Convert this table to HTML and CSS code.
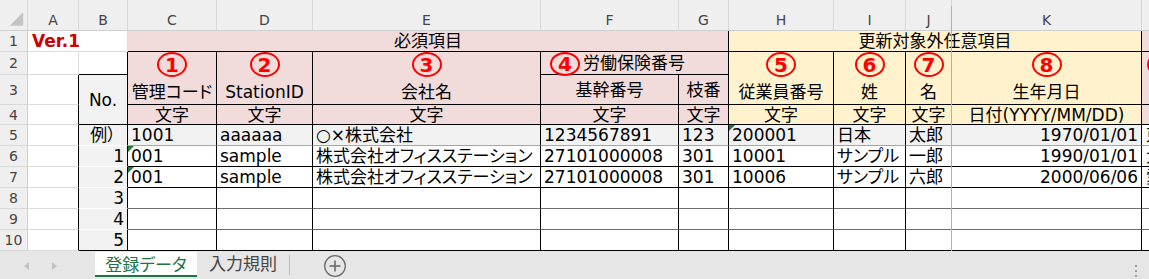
FILE: index.html
```html
<!DOCTYPE html>
<html lang="ja">
<head>
<meta charset="utf-8">
<title>登録データ</title>
<link rel="stylesheet" href="styles.css">
</head>
<body>
<div class="sheet">
  <div class="hd corner"><svg width="28" height="31" viewBox="0 0 28 31"><polygon points="24,12 24,26 10,26" fill="#c4c4c4"/></svg></div>
  <div class="hd">A</div><div class="hd">B</div><div class="hd">C</div><div class="hd">D</div>
  <div class="hd">E</div><div class="hd">F</div><div class="hd">G</div><div class="hd">H</div>
  <div class="hd">I</div><div class="hd">J</div><div class="hd">K</div><div class="hd">L</div>

  <div class="rh">1</div>
  <div class="c s2 ver">Ver.1</div>
  <div class="c s5 pk kr kb ctr">必須項目</div>
  <div class="c s4 yl kr kb ctr">更新対象外任意項目</div>
  <div class="c pk kb"></div>

  <div class="rh">2</div>
  <div class="c"></div>
  <div class="c kr kb"></div>
  <div class="c r2 pk kr kb hd2"><span class="num">1</span><span class="lbl">管理コード</span></div>
  <div class="c r2 pk kr kb hd2"><span class="num">2</span><span class="lbl">StationID</span></div>
  <div class="c r2 pk kr kb hd2"><span class="num">3</span><span class="lbl">会社名</span></div>
  <div class="c s2 pk kr kb rosai"><span class="num">4</span><span class="lbl">労働保険番号</span></div>
  <div class="c r2 yl kr kb hd2"><span class="num">5</span><span class="lbl">従業員番号</span></div>
  <div class="c r2 yl kr kb hd2"><span class="num">6</span><span class="lbl">姓</span></div>
  <div class="c r2 yl gr kb hd2"><span class="num">7</span><span class="lbl">名</span></div>
  <div class="c r2 yl kr kb hd2"><span class="num">8</span><span class="lbl">生年月日</span></div>
  <div class="c r2 pk kb hd2 lcol"><span class="num">9</span><span class="lbl">&nbsp;</span></div>

  <div class="rh">3</div>
  <div class="c kr"></div>
  <div class="c r2 gy kr kb ctr">No.</div>
  <div class="c pk kr kb ctr">基幹番号</div>
  <div class="c pk kr kb ctr">枝番</div>

  <div class="rh">4</div>
  <div class="c kr"></div>
  <div class="c pk kr kb ctr">文字</div>
  <div class="c pk kr kb ctr">文字</div>
  <div class="c pk kr kb ctr">文字</div>
  <div class="c pk kr kb ctr">文字</div>
  <div class="c pk kr kb ctr">文字</div>
  <div class="c yl kr kb ctr">文字</div>
  <div class="c yl kr kb ctr">文字</div>
  <div class="c yl gr kb ctr">文字</div>
  <div class="c yl kr kb ctr">日付(YYYY/MM/DD)</div>
  <div class="c pk kb"></div>

  <div class="rh">5</div>
  <div class="c kr"></div>
  <div class="c gy kr wb ctr">例）</div>
  <div class="c gy kr mb">1001</div>
  <div class="c gy kr mb">aaaaaa</div>
  <div class="c gy kr mb">○×株式会社</div>
  <div class="c gy kr mb">1234567891</div>
  <div class="c gy kr mb">123</div>
  <div class="c gy kr mb tri">200001</div>
  <div class="c gy kr mb">日本</div>
  <div class="c gy gr mb">太郎</div>
  <div class="c gy kr mb rt">1970/01/01</div>
  <div class="c mb lpad">東京都</div>

  <div class="rh">6</div>
  <div class="c kr"></div>
  <div class="c gy kr wb rt">1</div>
  <div class="c kr kb tri">001</div>
  <div class="c kr kb">sample</div>
  <div class="c kr kb">株式会社オフィスステーション</div>
  <div class="c kr kb">27101000008</div>
  <div class="c kr kb">301</div>
  <div class="c kr kb">10001</div>
  <div class="c kr kb">サンプル</div>
  <div class="c gr kb">一郎</div>
  <div class="c kr kb rt">1990/01/01</div>
  <div class="c kb lpad">大阪府</div>

  <div class="rh">7</div>
  <div class="c kr"></div>
  <div class="c gy kr wb rt">2</div>
  <div class="c kr kb tri">001</div>
  <div class="c kr kb">sample</div>
  <div class="c kr kb">株式会社オフィスステーション</div>
  <div class="c kr kb">27101000008</div>
  <div class="c kr kb">301</div>
  <div class="c kr kb">10006</div>
  <div class="c kr kb">サンプル</div>
  <div class="c gr kb">六郎</div>
  <div class="c kr kb rt">2000/06/06</div>
  <div class="c kb lpad">愛知県</div>

  <div class="rh">8</div>
  <div class="c kr"></div>
  <div class="c gy kr wb rt">3</div>
  <div class="c kr db"></div><div class="c kr db"></div><div class="c kr db"></div>
  <div class="c kr db"></div><div class="c kr db"></div><div class="c kr db"></div>
  <div class="c kr db"></div><div class="c gr db"></div><div class="c kr db"></div>
  <div class="c db"></div>

  <div class="rh">9</div>
  <div class="c kr"></div>
  <div class="c gy kr wb rt">4</div>
  <div class="c kr db"></div><div class="c kr db"></div><div class="c kr db"></div>
  <div class="c kr db"></div><div class="c kr db"></div><div class="c kr db"></div>
  <div class="c kr db"></div><div class="c gr db"></div><div class="c kr db"></div>
  <div class="c db"></div>

  <div class="rh">10</div>
  <div class="c kr"></div>
  <div class="c gy kr kb rt">5</div>
  <div class="c kr kb"></div><div class="c kr kb"></div><div class="c kr kb"></div>
  <div class="c kr kb"></div><div class="c kr kb"></div><div class="c kr kb"></div>
  <div class="c kr kb"></div><div class="c gr kb"></div><div class="c kr kb"></div>
  <div class="c kb"></div>

  <div class="freeze"></div>
</div>

<div class="tabs">
  <div class="nav">
    <svg width="95" height="28" viewBox="0 0 95 28">
      <polygon points="29,11 24,15 29,19" fill="#c2c2c2"/>
      <polygon points="52,11 57,15 52,19" fill="#c2c2c2"/>
    </svg>
  </div>
  <div class="tab active">登録データ</div>
  <div class="tab">入力規則</div>
  <div class="sep"></div>
  <div class="add">
    <svg width="24" height="24" viewBox="0 0 24 24">
      <circle cx="12" cy="12" r="10.3" fill="none" stroke="#6b6b6b" stroke-width="1.3"/>
      <line x1="12" y1="6.5" x2="12" y2="17.5" stroke="#6b6b6b" stroke-width="1.6"/>
      <line x1="6.5" y1="12" x2="17.5" y2="12" stroke="#6b6b6b" stroke-width="1.6"/>
    </svg>
  </div>
  <div class="dots">
    <svg width="4" height="16" viewBox="0 0 4 16">
      <rect x="1" y="1" width="2" height="2" fill="#9a9a9a"/>
      <rect x="1" y="6" width="2" height="2" fill="#9a9a9a"/>
      <rect x="1" y="11" width="2" height="2" fill="#9a9a9a"/>
    </svg>
  </div>
</div>
</body>
</html>
```

FILE: styles.css
```css
* { box-sizing: border-box; }

html, body {
  margin: 0;
  padding: 0;
  background: #ffffff;
  overflow: hidden;
}

body {
  width: 1149px;
  height: 279px;
  font-family: "DejaVu Sans", "Noto Sans CJK JP", sans-serif;
  font-size: 17px;
  color: #000;
  font-feature-settings: "palt";
}

.sheet {
  display: grid;
  grid-template-columns: 28px 51px 49px 89px 96px 228px 138px 50px 105px 72px 46px 190px 120px;
  grid-template-rows: 31px 21px 23px 30px 20px repeat(6, 21px);
  width: 1262px;
  position: relative;
}

/* column headers */
.hd {
  background: #efefef;
  border-right: 1px solid #d6d6d6;
  border-bottom: 1px solid #cfcfcf;
  color: #444;
  font-size: 14px;
  display: flex;
  align-items: center;
  justify-content: center;
  padding-top: 10px;
}
.corner { padding: 0; }

/* row headers */
.rh {
  background: #efefef;
  border-right: 1px solid #cfcfcf;
  border-bottom: 1px solid #d9d9d9;
  color: #444;
  font-size: 14px;
  display: flex;
  align-items: center;
  justify-content: center;
}

/* cells */
.c {
  border-right: 1px solid #dcdcdc;
  border-bottom: 1px solid #dcdcdc;
  display: flex;
  align-items: center;
  padding: 0 3px;
  white-space: nowrap;
  overflow: hidden;
  line-height: 20px;
}

.s2 { grid-column: span 2; }
.s4 { grid-column: span 4; }
.s5 { grid-column: span 5; }
.r2 { grid-row: span 2; }

.pk { background: #f2dcdb; }
.yl { background: #fff2cc; }
.gy { background: #f2f2f2; }

.kr { border-right-color: #000; }
.gr { border-right-color: #a8a8a8; }
.kb { border-bottom-color: #000; }
.mb { border-bottom-color: #a6a6a6; }
.db { border-bottom-color: #6e6e6e; }
.wb { border-bottom-color: #ffffff; }

.ctr { justify-content: center; }
.rt { justify-content: flex-end; padding-right: 3px; }
.lpad { padding-left: 4px; }

.ver {
  color: #cc0000;
  font-weight: bold;
  padding-left: 4px;
}

/* merged header cells with circled numbers */
.hd2 {
  flex-direction: column;
  justify-content: space-between;
  align-items: center;
  padding: 0 0 1px;
}
.hd2 .lbl { line-height: 22px; }

.num {
  display: inline-flex;
  align-items: center;
  justify-content: center;
  flex: none;
  width: 30px;
  height: 25px;
  border: 2px solid #ff0000;
  border-radius: 50%;
  color: #ff0000;
  font-family: "DejaVu Sans", sans-serif;
  font-weight: bold;
  font-size: 20px;
  line-height: 1;
}

.rosai {
  align-items: flex-start;
  padding-left: 9px;
  overflow: visible;
  position: relative;
  z-index: 1;
}
.rosai .num { height: 24px; }
.rosai .lbl { line-height: 22px; margin-left: 3px; }

.lcol { align-items: flex-start; padding-left: 5px; }

/* green error indicator */
.tri { position: relative; }
.tri::before {
  content: "";
  position: absolute;
  left: 0;
  top: 0;
  border-top: 6px solid #1e7b3a;
  border-right: 6px solid transparent;
}

.freeze {
  position: absolute;
  left: 951px;
  top: 6px;
  width: 1px;
  height: 245px;
  background: #b0b0b0;
}

/* sheet tabs */
.tabs {
  display: flex;
  align-items: flex-start;
  height: 28px;
  background: #e6e6e6;
  font-family: "Noto Sans CJK JP", sans-serif;
  font-size: 17px;
}
.nav { width: 95px; height: 28px; }
.tab {
  margin-top: 1px;
  padding: 0 12px;
  line-height: 22px;
  color: #444;
}
.tab.active {
  width: 102px;
  height: 25px;
  padding: 0;
  background: #ffffff;
  color: #217346;
  border-bottom: 2px solid #217346;
  display: flex;
  justify-content: center;
  align-items: center;
}
.sep {
  width: 1px;
  height: 20px;
  margin-top: 4px;
  background: #bdbdbd;
}
.add { margin-left: 33px; margin-top: 3px; height: 24px; }
.dots { margin-left: auto; margin-right: 11px; margin-top: 9px; }
```
